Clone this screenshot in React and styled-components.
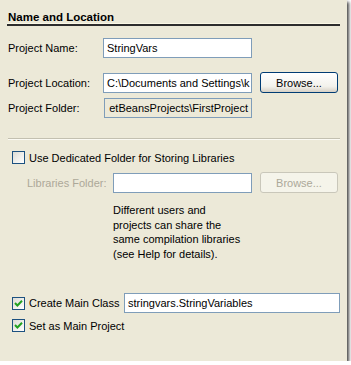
import React from 'react';
import styled, { createGlobalStyle } from 'styled-components';

const GlobalStyle = createGlobalStyle`
  html, body {
    margin: 0;
    padding: 0;
    background: #ffffff;
  }
  body {
    font-family: "Liberation Sans", Arial, sans-serif;
  }
`;

const Panel = styled.div`
  width: 347px;
  height: 361px;
  box-sizing: border-box;
  background: #ece9d8;
  box-shadow: 2px 2px 3px rgba(40, 40, 40, 0.85);
  padding: 11px 7px 0 8px;
  display: flex;
  flex-direction: column;
  font-family: "Liberation Sans", Arial, sans-serif;
  font-size: 11px;
  color: #000;
`;

const Title = styled.div`
  font-weight: bold;
  font-size: 11.5px;
  line-height: 12px;
`;

const TitleRule = styled.div`
  margin-left: -1px;
  height: 0;
  border-top: 1px solid #fbf8e6;
  border-bottom: 2px solid #2d2d2d;
`;

const Row = styled.div`
  display: flex;
  align-items: center;
  margin-top: ${p => p.$top || 0}px;
  padding-left: ${p => p.$indent || 0}px;
`;

const Label = styled.span`
  width: ${p => p.$width}px;
  flex: none;
  color: ${p => (p.$disabled ? '#aca899' : '#000')};
  white-space: nowrap;
`;

const Field = styled.div`
  width: ${p => p.$width}px;
  height: 20px;
  box-sizing: border-box;
  border: 1px solid #7f9db9;
  background: ${p => (p.$disabled ? '#ece9d8' : '#fff')};
  padding: 0 3px;
  display: flex;
  align-items: center;
  justify-content: ${p => (p.$scrolled ? 'flex-end' : 'flex-start')};
  overflow: hidden;
  white-space: nowrap;
  flex: none;
`;

const Button = styled.div`
  margin-left: ${p => p.$left || 8}px;
  width: 78px;
  height: 21px;
  box-sizing: border-box;
  border: 1px solid ${p => (p.$disabled ? '#c9c7ba' : '#003c74')};
  border-radius: 3px;
  background: ${p =>
    p.$disabled ? '#f5f4ea' : 'linear-gradient(#ffffff, #f3f2ec 70%, #d6d0c5)'};
  color: ${p => (p.$disabled ? '#aca899' : '#000')};
  display: flex;
  align-items: center;
  justify-content: center;
  flex: none;
`;

const Rule = styled.div`
  margin-top: ${p => p.$top}px;
  border-top: 1px solid #c3c0b0;
  border-bottom: 1px solid #fbfaf3;
`;

const Box = styled.span`
  width: 13px;
  height: 13px;
  box-sizing: border-box;
  border: 1px solid #1c5180;
  background: linear-gradient(135deg, #dcdcd5, #ffffff);
  margin: 0 4px 0 4px;
  display: flex;
  align-items: center;
  justify-content: center;
  flex: none;
`;

const Check = () => (
  <svg width="9" height="9" viewBox="0 0 9 9">
    <path d="M1 4 L3.4 6.5 L8 1.8" fill="none" stroke="#21a121" strokeWidth="2" />
  </svg>
);

const Note = styled.div`
  margin-top: 10px;
  padding-left: 105px;
  line-height: 14.5px;
`;

const Spacer = styled.div`
  height: ${p => p.$h}px;
  flex: none;
`;

export default function App() {
  return (
    <>
      <GlobalStyle />
      <Panel>
        <Title>Name and Location</Title>
        <TitleRule />

        <Row $top={12}>
          <Label $width={95}>Project Name:</Label>
          <Field $width={149}>StringVars</Field>
        </Row>
        <Row $top={14}>
          <Label $width={95}>Project Location:</Label>
          <Field $width={149}>C:\Documents and Settings\k</Field>
          <Button>Browse...</Button>
        </Row>
        <Row $top={5}>
          <Label $width={96}>Project Folder:</Label>
          <Field $width={148} $disabled $scrolled>etBeansProjects\FirstProject</Field>
        </Row>

        <Rule $top={20} />

        <Row $top={11}>
          <Box />
          <span>Use Dedicated Folder for Storing Libraries</span>
        </Row>
        <Row $top={8} $indent={19}>
          <Label $width={86} $disabled>Libraries Folder:</Label>
          <Field $width={139} />
          <Button $disabled>Browse...</Button>
        </Row>
        <Note>
          Different users and
          <br />
          projects can share the
          <br />
          same compilation libraries
          <br />
          (see Help for details).
        </Note>

        <Spacer $h={32} />
        <Row>
          <Box>
            <Check />
          </Box>
          <Label $width={95}>Create Main Class</Label>
          <Field $width={216}>stringvars.StringVariables</Field>
        </Row>
        <Row $top={6}>
          <Box>
            <Check />
          </Box>
          <span>Set as Main Project</span>
        </Row>
      </Panel>
    </>
  );
}
